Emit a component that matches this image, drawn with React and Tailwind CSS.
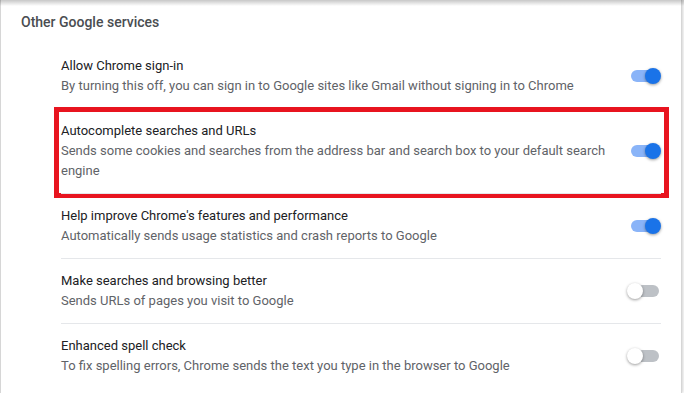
import React from "react";

const rows = [
  { t: "Allow Chrome sign-in", s: "By turning this off, you can sign in to Google sites like Gmail without signing in to Chrome", on: true },
  { t: "Autocomplete searches and URLs", s: "Sends some cookies and searches from the address bar and search box to your default search engine", on: true, hl: true },
  { t: "Help improve Chrome's features and performance", s: "Automatically sends usage statistics and crash reports to Google", on: true },
  { t: "Make searches and browsing better", s: "Sends URLs of pages you visit to Google", on: false },
  { t: "Enhanced spell check", s: "To fix spelling errors, Chrome sends the text you type in the browser to Google", on: false },
];

function Toggle({ on }) {
  return (
    <div className="relative w-[34px] h-[18px] shrink-0">
      <div
        className={
          "absolute left-[4px] top-[3px] w-[28px] h-[12px] rounded-full " +
          (on ? "bg-[#8ab4f8]" : "bg-[#bdc1c6]")
        }
      />
      <div
        className={
          "absolute top-[1px] w-[16px] h-[16px] rounded-full shadow-[0_1px_3px_rgba(0,0,0,0.4)] " +
          (on ? "left-[18px] bg-[#1a73e8]" : "left-0 bg-white")
        }
      />
    </div>
  );
}

export default function App() {
  return (
    <div className="relative w-[684px] h-[393px] bg-white overflow-hidden font-['Roboto',sans-serif]">
      <div className="w-[682px] h-full border-x border-[#d6d6d6] shadow-[1px_0_3px_rgba(0,0,0,0.18)] bg-white">
        <div className="h-[44px] pl-[20px] flex items-center text-[14px] font-medium text-[#4a4d51]">
          Other Google services
        </div>
        <div className="pl-[60px] pr-[20px]">
          {rows.map((r, i) => (
            <div
              key={i}
              className={
                "relative flex items-center min-h-[64px] py-[12px] " +
                (i > 0 ? "border-t border-[#e5e7ea]" : "")
              }
            >
              <div className="flex-1 pr-[10px] text-[13px] leading-[20px]">
                <div className="text-[#202124]">{r.t}</div>
                <div className="text-[#5f6368]">{r.s}</div>
              </div>
              <Toggle on={r.on} />
              {r.hl && (
                <div className="absolute left-[-7px] right-[-8px] top-[-2px] bottom-[-5px] border-[5px] border-[#e8141f] pointer-events-none" />
              )}
            </div>
          ))}
        </div>
      </div>
      <div className="absolute left-0 top-0 w-full h-[6px] bg-gradient-to-b from-[rgba(0,0,0,0.22)] to-[rgba(0,0,0,0)]" />
    </div>
  );
}
